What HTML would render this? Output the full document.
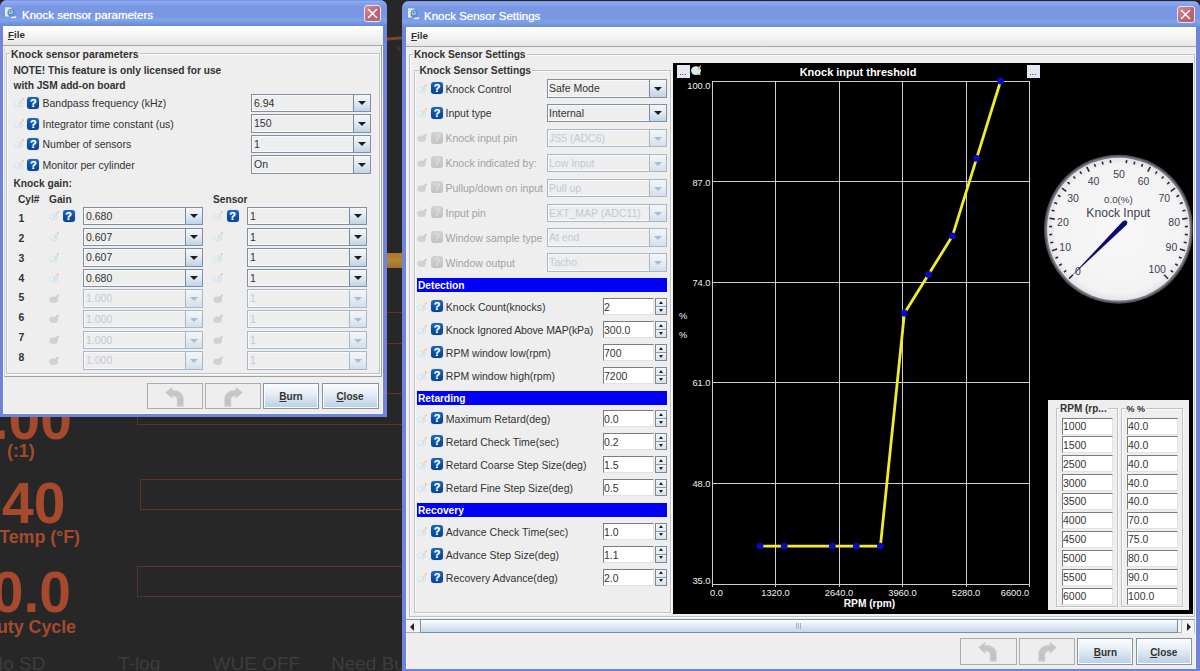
<!DOCTYPE html><html><head><meta charset="utf-8"><title>Knock</title><style>
*{box-sizing:border-box;margin:0;padding:0}
html,body{width:1200px;height:671px;overflow:hidden;background:#282727}
#pg{position:absolute;left:0;top:0;width:1200px;height:671px;overflow:hidden}
body{position:relative;font-family:"Liberation Sans",sans-serif;font-size:10.5px;color:#323232}
.a{position:absolute}
.t{position:absolute;white-space:nowrap;line-height:12px;height:12px}
.b{font-weight:bold}
.win{position:absolute;background:#eeeeee;overflow:hidden}
.tb{position:absolute;left:0;right:0;top:0;background:linear-gradient(#6e8cd6 0,#8eabf2 5%,#84a2ec 14%,#7997e2 26%,#7896e2 60%,#7ea4e7 78%,#7394de 90%,#6985d6 100%)}
.ttl{position:absolute;color:#fff;font-size:11.5px;white-space:nowrap;line-height:14px;text-shadow:0 0 1px #dfe8ff}
.cls{position:absolute;width:17.5px;height:17px;border:1px solid #ecdde8;border-radius:3px;background:linear-gradient(135deg,#cf909c,#b96876 55%,#b36070)}
.menu{position:absolute;background:linear-gradient(#ffffff,#f4f4f4 50%,#e6e6e6);border-bottom:1px solid #a8a8a8}
.grp{position:absolute;border:1px solid #bfc3c8;box-shadow:1px 1px 0 #fafafa,inset 1px 1px 0 #fafafa}
.gl{position:absolute;background:#eeeeee;font-weight:bold;font-size:10.2px;white-space:nowrap;line-height:12px;height:12px;padding:0 1px}
.cb{position:absolute;height:18.5px;border:1px solid #8090a0;background:#eeeeee;box-shadow:inset 0 0 0 1px #f8f9fa}
.cb .v{position:absolute;left:2.5px;top:2px;line-height:12px;font-size:10.5px;white-space:nowrap}
.cb .ar{position:absolute;right:0;top:0;bottom:0;width:17px;border-left:1px solid #7a8a99;background:linear-gradient(#f4f7fa,#e2ebf3 45%,#c0d3e6 100%)}
.cb .ar:after{content:"";position:absolute;left:4px;top:6.5px;border-left:4.5px solid transparent;border-right:4.5px solid transparent;border-top:4.5px solid #1e1e1e}
.cb.d{border-color:#a9b8c8;}
.cb.d .v{color:#c4cad1}
.cb.d .ar{border-left-color:#a9b8c8;background:linear-gradient(#f4f6f8,#e6ecf2 50%,#d3dfeb)}
.cb.d .ar:after{border-top-color:#a6bcd3;left:4.5px;top:7px;border-left-width:4px;border-right-width:4px;border-top-width:4px}
.hp{position:absolute;width:12px;height:12px;border-radius:3px;background:linear-gradient(#1c68ba,#0a50a0 55%,#08468e);box-shadow:0 0 1px #6aa0d8}
.hp:after{content:"?";position:absolute;left:0;right:0;top:0;text-align:center;color:#fff;font-weight:bold;font-size:11px;line-height:12.5px;text-shadow:0 0 1px #9cc8f0}
.hp.d{background:linear-gradient(#d2d2d2,#c2c2c2);box-shadow:none}
.hp.d:after{color:#dcdcdc;text-shadow:none}
.btn{position:absolute;border:1px solid #8494a4;background:linear-gradient(#fbfcfe,#e6eef6 40%,#b9cee4 100%);box-shadow:inset 0 0 0 1px #fbfcfd;text-align:center;font-weight:bold;font-size:10px}
.btn.d{background:#eeeeee;border-color:#a9adb1;box-shadow:none}
.btn span{position:absolute;left:0;right:0;top:7px;line-height:12px}
.bar{position:absolute;background:#0000f4;color:#fff;font-weight:bold;font-size:10.2px;white-space:nowrap;line-height:16.5px;padding-left:1px}
.tf{position:absolute;background:#fff;border-top:1.5px solid #7c7c7c;border-left:1.5px solid #7c7c7c;border-right:1px solid #e2e2e2;border-bottom:1px solid #e2e2e2}
.tf span{position:absolute;left:0px;top:2px;line-height:12px;font-size:10.5px;white-space:nowrap;color:#333}
.sp{position:absolute;width:12px;border:1px solid #7a8a99;background:linear-gradient(#f4f7fa,#dfe9f2 49%,#8a9aa9 49%,#8a9aa9 54%,#f0f4f8 54%,#d5e1ed)}
.sp:before{content:"";position:absolute;left:2.5px;top:1.5px;border-left:2.5px solid transparent;border-right:2.5px solid transparent;border-bottom:3px solid #222}
.sp:after{content:"";position:absolute;left:2.5px;bottom:2.5px;border-left:2.5px solid transparent;border-right:2.5px solid transparent;border-top:3px solid #222}
</style></head><body><div id="pg">
<div class="a b" style="right:1128px;top:389px;font-size:57px;line-height:60px;color:#a54a2c;white-space:nowrap">.00</div>
<div class="a b" style="left:7px;top:441px;font-size:17.8px;line-height:20px;color:#a54a2c;white-space:nowrap">(:1)</div>
<div class="a b" style="right:1134.5px;top:472.5px;font-size:57px;line-height:60px;color:#a54a2c;white-space:nowrap">40</div>
<div class="a b" style="right:1120px;top:526.5px;font-size:17.8px;line-height:20px;color:#a54a2c;white-space:nowrap">Temp (°F)</div>
<div class="a b" style="right:1129px;top:562px;font-size:57px;line-height:60px;color:#a54a2c;white-space:nowrap">10.0</div>
<div class="a b" style="right:1124px;top:616.5px;font-size:17.8px;line-height:20px;color:#a54a2c;white-space:nowrap">Duty Cycle</div>
<div class="a" style="left:137px;top:312px;width:270px;height:31.5px;border:1px solid #5a3426"></div>
<div class="a" style="left:137px;top:393px;width:270px;height:31.5px;border:1px solid #5a3426"></div>
<div class="a" style="left:140px;top:479px;width:270px;height:31px;border:1px solid #5a3426"></div>
<div class="a" style="left:137px;top:566px;width:270px;height:31px;border:1px solid #5a3426"></div>
<div class="a" style="right:1154.5px;top:653px;font-size:19px;line-height:22px;color:#3d3c3c;white-space:nowrap">No SD</div>
<div class="a" style="left:118px;top:653px;font-size:19px;line-height:22px;color:#3d3c3c;white-space:nowrap">T-log</div>
<div class="a" style="left:212.5px;top:653px;font-size:19px;line-height:22px;color:#3d3c3c;white-space:nowrap">WUE OFF</div>
<div class="a" style="left:331px;top:653px;font-size:19px;line-height:22px;color:#3d3c3c;white-space:nowrap">Need Bu</div>
<div class="a" style="left:385px;top:36.5px;width:18px;height:3px;background:#7e4026;transform:rotate(-5deg)"></div>
<div class="a" style="left:386px;top:253px;width:16px;height:15px;background:linear-gradient(#a9772f,#b58438 50%,#a06f2c)"></div>
<div class="a" style="left:398px;top:46px;width:2px;height:5px;background:#5a3020;transform:rotate(-30deg)"></div>
<div class="win" id="w1" style="left:0;top:0;width:386.5px;height:416.7px;border-radius:7px 7px 0 0;background:#7084dc">
<div class="tb" style="height:26px"></div>
<div class="a" style="left:2.5px;top:26px;width:380.5px;height:387.75px;background:#eeeeee;border-left:1.5px solid #f8f8fc;border-right:1px solid #f8f8fc;border-bottom:1px solid #f8f8fc"></div>
<div class="a" style="left:4px;top:46px;width:378px;height:330.5px;border:1px solid #a0a0a0;border-top:none;border-left-color:#d8d8d8"></div>
<svg class="a" style="left:4px;top:6px" width="14" height="14" viewBox="0 0 14 14"><rect x="1" y="1.5" width="4" height="9" fill="#e6f0e4"/><rect x="1" y="1.5" width="6.5" height="3" fill="#dbe8e0"/><circle cx="7.3" cy="6.6" r="3.9" fill="#5d92c8"/><circle cx="6.8" cy="6" r="2.1" fill="#b7d3ee"/><circle cx="6.6" cy="5.6" r="0.9" fill="#3c6f9e"/><path d="M6.5 11 L12.2 10.3 L12.2 12 L7.5 12.2Z" fill="#eef0f6"/></svg>
<div class="ttl" style="left:22px;top:8px">Knock sensor parameters</div>
<div class="cls" style="left:363.5px;top:5px"><svg width="15" height="15" viewBox="0 0 15 15" style="position:absolute;left:0;top:0"><path d="M3.5 3.5 L11.5 11.5 M11.5 3.5 L3.5 11.5" stroke="#fff" stroke-width="1.5" stroke-linecap="round"/></svg></div>
<div class="menu" style="left:3px;top:26px;width:380px;height:19.5px"></div>
<div class="t b" style="left:8px;top:29px;font-size:9.8px"><u>F</u>ile</div>
<div class="grp" style="left:6px;top:53px;width:374px;height:321px"></div>
<div class="gl" style="left:10px;top:48.5px;font-size:10.4px">Knock sensor parameters</div>
<div class="t b" style="left:13.5px;top:64.5px;font-size:10.2px">NOTE! This feature is only licensed for use</div>
<div class="t b" style="left:13.5px;top:80px;font-size:10.2px">with JSM add-on board</div>
<svg class="a" style="left:14px;top:97.0px" width="11" height="11" viewBox="0 0 11 11"><ellipse cx="4.6" cy="6.9" rx="4.7" ry="3.4" fill="#d7e7f1"/><ellipse cx="4.2" cy="6.4" rx="3.2" ry="2" fill="#e6f0f7"/><path d="M5 6 L8.7 1 L10 2 L6.4 7Z" fill="#efdcbe"/><path d="M8 1.9 L8.7 1 L10 2 L9.3 2.9Z" fill="#efb996"/><path d="M5 6 L6.4 7 L4.6 7.6Z" fill="#cdbfae"/></svg>
<div class="hp" style="left:27.3px;top:97.0px"></div>
<div class="t " style="left:42.5px;top:97.0px;">Bandpass frequency (kHz)</div>
<div class="cb" style="left:250.5px;top:93.5px;width:120px"><span class="v">6.94</span><span class="ar"></span></div>
<svg class="a" style="left:14px;top:117.6px" width="11" height="11" viewBox="0 0 11 11"><ellipse cx="4.6" cy="6.9" rx="4.7" ry="3.4" fill="#d7e7f1"/><ellipse cx="4.2" cy="6.4" rx="3.2" ry="2" fill="#e6f0f7"/><path d="M5 6 L8.7 1 L10 2 L6.4 7Z" fill="#efdcbe"/><path d="M8 1.9 L8.7 1 L10 2 L9.3 2.9Z" fill="#efb996"/><path d="M5 6 L6.4 7 L4.6 7.6Z" fill="#cdbfae"/></svg>
<div class="hp" style="left:27.3px;top:117.6px"></div>
<div class="t " style="left:42.5px;top:117.6px;">Integrator time constant (us)</div>
<div class="cb" style="left:250.5px;top:114.1px;width:120px"><span class="v">150</span><span class="ar"></span></div>
<svg class="a" style="left:14px;top:138.2px" width="11" height="11" viewBox="0 0 11 11"><ellipse cx="4.6" cy="6.9" rx="4.7" ry="3.4" fill="#d7e7f1"/><ellipse cx="4.2" cy="6.4" rx="3.2" ry="2" fill="#e6f0f7"/><path d="M5 6 L8.7 1 L10 2 L6.4 7Z" fill="#efdcbe"/><path d="M8 1.9 L8.7 1 L10 2 L9.3 2.9Z" fill="#efb996"/><path d="M5 6 L6.4 7 L4.6 7.6Z" fill="#cdbfae"/></svg>
<div class="hp" style="left:27.3px;top:138.2px"></div>
<div class="t " style="left:42.5px;top:138.2px;">Number of sensors</div>
<div class="cb" style="left:250.5px;top:134.7px;width:120px"><span class="v">1</span><span class="ar"></span></div>
<svg class="a" style="left:14px;top:158.8px" width="11" height="11" viewBox="0 0 11 11"><ellipse cx="4.6" cy="6.9" rx="4.7" ry="3.4" fill="#d7e7f1"/><ellipse cx="4.2" cy="6.4" rx="3.2" ry="2" fill="#e6f0f7"/><path d="M5 6 L8.7 1 L10 2 L6.4 7Z" fill="#efdcbe"/><path d="M8 1.9 L8.7 1 L10 2 L9.3 2.9Z" fill="#efb996"/><path d="M5 6 L6.4 7 L4.6 7.6Z" fill="#cdbfae"/></svg>
<div class="hp" style="left:27.3px;top:158.8px"></div>
<div class="t " style="left:42.5px;top:158.8px;">Monitor per cylinder</div>
<div class="cb" style="left:250.5px;top:155.3px;width:120px"><span class="v">On</span><span class="ar"></span></div>
<div class="t b" style="left:13.5px;top:178.2px;font-size:10.2px">Knock gain:</div>
<div class="t b" style="left:18px;top:193.5px;font-size:10.2px">Cyl#</div>
<div class="t b" style="left:49px;top:193.5px;font-size:10.2px">Gain</div>
<div class="t b" style="left:213px;top:193.5px;font-size:10.2px">Sensor</div>
<div class="t b" style="left:18.5px;top:213.4px;font-size:10.4px">1</div>
<svg class="a" style="left:49px;top:210.4px" width="11" height="11" viewBox="0 0 11 11"><ellipse cx="4.6" cy="6.9" rx="4.7" ry="3.4" fill="#d7e7f1"/><ellipse cx="4.2" cy="6.4" rx="3.2" ry="2" fill="#e6f0f7"/><path d="M5 6 L8.7 1 L10 2 L6.4 7Z" fill="#efdcbe"/><path d="M8 1.9 L8.7 1 L10 2 L9.3 2.9Z" fill="#efb996"/><path d="M5 6 L6.4 7 L4.6 7.6Z" fill="#cdbfae"/></svg>
<div class="hp" style="left:62.5px;top:210.4px"></div>
<div class="cb" style="left:82.5px;top:206.9px;width:120px"><span class="v">0.680</span><span class="ar"></span></div>
<svg class="a" style="left:213px;top:210.4px" width="11" height="11" viewBox="0 0 11 11"><ellipse cx="4.6" cy="6.9" rx="4.7" ry="3.4" fill="#d7e7f1"/><ellipse cx="4.2" cy="6.4" rx="3.2" ry="2" fill="#e6f0f7"/><path d="M5 6 L8.7 1 L10 2 L6.4 7Z" fill="#efdcbe"/><path d="M8 1.9 L8.7 1 L10 2 L9.3 2.9Z" fill="#efb996"/><path d="M5 6 L6.4 7 L4.6 7.6Z" fill="#cdbfae"/></svg>
<div class="hp" style="left:226.5px;top:210.4px"></div>
<div class="cb" style="left:246.5px;top:206.9px;width:120px"><span class="v">1</span><span class="ar"></span></div>
<div class="t b" style="left:18.5px;top:233.14000000000001px;font-size:10.4px">2</div>
<svg class="a" style="left:49px;top:231.0px" width="11" height="11" viewBox="0 0 11 11"><ellipse cx="4.6" cy="6.9" rx="4.7" ry="3.4" fill="#d7e7f1"/><ellipse cx="4.2" cy="6.4" rx="3.2" ry="2" fill="#e6f0f7"/><path d="M5 6 L8.7 1 L10 2 L6.4 7Z" fill="#efdcbe"/><path d="M8 1.9 L8.7 1 L10 2 L9.3 2.9Z" fill="#efb996"/><path d="M5 6 L6.4 7 L4.6 7.6Z" fill="#cdbfae"/></svg>
<div class="cb" style="left:82.5px;top:227.5px;width:120px"><span class="v">0.607</span><span class="ar"></span></div>
<svg class="a" style="left:213px;top:231.0px" width="11" height="11" viewBox="0 0 11 11"><ellipse cx="4.6" cy="6.9" rx="4.7" ry="3.4" fill="#d7e7f1"/><ellipse cx="4.2" cy="6.4" rx="3.2" ry="2" fill="#e6f0f7"/><path d="M5 6 L8.7 1 L10 2 L6.4 7Z" fill="#efdcbe"/><path d="M8 1.9 L8.7 1 L10 2 L9.3 2.9Z" fill="#efb996"/><path d="M5 6 L6.4 7 L4.6 7.6Z" fill="#cdbfae"/></svg>
<div class="cb" style="left:246.5px;top:227.5px;width:120px"><span class="v">1</span><span class="ar"></span></div>
<div class="t b" style="left:18.5px;top:252.88px;font-size:10.4px">3</div>
<svg class="a" style="left:49px;top:251.60000000000002px" width="11" height="11" viewBox="0 0 11 11"><ellipse cx="4.6" cy="6.9" rx="4.7" ry="3.4" fill="#d7e7f1"/><ellipse cx="4.2" cy="6.4" rx="3.2" ry="2" fill="#e6f0f7"/><path d="M5 6 L8.7 1 L10 2 L6.4 7Z" fill="#efdcbe"/><path d="M8 1.9 L8.7 1 L10 2 L9.3 2.9Z" fill="#efb996"/><path d="M5 6 L6.4 7 L4.6 7.6Z" fill="#cdbfae"/></svg>
<div class="cb" style="left:82.5px;top:248.10000000000002px;width:120px"><span class="v">0.607</span><span class="ar"></span></div>
<svg class="a" style="left:213px;top:251.60000000000002px" width="11" height="11" viewBox="0 0 11 11"><ellipse cx="4.6" cy="6.9" rx="4.7" ry="3.4" fill="#d7e7f1"/><ellipse cx="4.2" cy="6.4" rx="3.2" ry="2" fill="#e6f0f7"/><path d="M5 6 L8.7 1 L10 2 L6.4 7Z" fill="#efdcbe"/><path d="M8 1.9 L8.7 1 L10 2 L9.3 2.9Z" fill="#efb996"/><path d="M5 6 L6.4 7 L4.6 7.6Z" fill="#cdbfae"/></svg>
<div class="cb" style="left:246.5px;top:248.10000000000002px;width:120px"><span class="v">1</span><span class="ar"></span></div>
<div class="t b" style="left:18.5px;top:272.62px;font-size:10.4px">4</div>
<svg class="a" style="left:49px;top:272.2px" width="11" height="11" viewBox="0 0 11 11"><ellipse cx="4.6" cy="6.9" rx="4.7" ry="3.4" fill="#d7e7f1"/><ellipse cx="4.2" cy="6.4" rx="3.2" ry="2" fill="#e6f0f7"/><path d="M5 6 L8.7 1 L10 2 L6.4 7Z" fill="#efdcbe"/><path d="M8 1.9 L8.7 1 L10 2 L9.3 2.9Z" fill="#efb996"/><path d="M5 6 L6.4 7 L4.6 7.6Z" fill="#cdbfae"/></svg>
<div class="cb" style="left:82.5px;top:268.7px;width:120px"><span class="v">0.680</span><span class="ar"></span></div>
<svg class="a" style="left:213px;top:272.2px" width="11" height="11" viewBox="0 0 11 11"><ellipse cx="4.6" cy="6.9" rx="4.7" ry="3.4" fill="#d7e7f1"/><ellipse cx="4.2" cy="6.4" rx="3.2" ry="2" fill="#e6f0f7"/><path d="M5 6 L8.7 1 L10 2 L6.4 7Z" fill="#efdcbe"/><path d="M8 1.9 L8.7 1 L10 2 L9.3 2.9Z" fill="#efb996"/><path d="M5 6 L6.4 7 L4.6 7.6Z" fill="#cdbfae"/></svg>
<div class="cb" style="left:246.5px;top:268.7px;width:120px"><span class="v">1</span><span class="ar"></span></div>
<div class="t b" style="left:18.5px;top:292.36px;font-size:10.4px">5</div>
<svg class="a" style="left:49px;top:292.8px" width="11" height="11" viewBox="0 0 11 11"><ellipse cx="4.6" cy="6.8" rx="4.4" ry="3.2" fill="#d2d2d2"/><path d="M5 5.5 L8.8 1.2 L10.2 2.4 L7 6.8Z" fill="#cecece"/></svg>
<div class="cb d" style="left:82.5px;top:289.3px;width:120px"><span class="v">1.000</span><span class="ar"></span></div>
<svg class="a" style="left:213px;top:292.8px" width="11" height="11" viewBox="0 0 11 11"><ellipse cx="4.6" cy="6.8" rx="4.4" ry="3.2" fill="#d2d2d2"/><path d="M5 5.5 L8.8 1.2 L10.2 2.4 L7 6.8Z" fill="#cecece"/></svg>
<div class="cb d" style="left:246.5px;top:289.3px;width:120px"><span class="v">1</span><span class="ar"></span></div>
<div class="t b" style="left:18.5px;top:312.1px;font-size:10.4px">6</div>
<svg class="a" style="left:49px;top:313.4px" width="11" height="11" viewBox="0 0 11 11"><ellipse cx="4.6" cy="6.8" rx="4.4" ry="3.2" fill="#d2d2d2"/><path d="M5 5.5 L8.8 1.2 L10.2 2.4 L7 6.8Z" fill="#cecece"/></svg>
<div class="cb d" style="left:82.5px;top:309.9px;width:120px"><span class="v">1.000</span><span class="ar"></span></div>
<svg class="a" style="left:213px;top:313.4px" width="11" height="11" viewBox="0 0 11 11"><ellipse cx="4.6" cy="6.8" rx="4.4" ry="3.2" fill="#d2d2d2"/><path d="M5 5.5 L8.8 1.2 L10.2 2.4 L7 6.8Z" fill="#cecece"/></svg>
<div class="cb d" style="left:246.5px;top:309.9px;width:120px"><span class="v">1</span><span class="ar"></span></div>
<div class="t b" style="left:18.5px;top:331.84000000000003px;font-size:10.4px">7</div>
<svg class="a" style="left:49px;top:334.0px" width="11" height="11" viewBox="0 0 11 11"><ellipse cx="4.6" cy="6.8" rx="4.4" ry="3.2" fill="#d2d2d2"/><path d="M5 5.5 L8.8 1.2 L10.2 2.4 L7 6.8Z" fill="#cecece"/></svg>
<div class="cb d" style="left:82.5px;top:330.5px;width:120px"><span class="v">1.000</span><span class="ar"></span></div>
<svg class="a" style="left:213px;top:334.0px" width="11" height="11" viewBox="0 0 11 11"><ellipse cx="4.6" cy="6.8" rx="4.4" ry="3.2" fill="#d2d2d2"/><path d="M5 5.5 L8.8 1.2 L10.2 2.4 L7 6.8Z" fill="#cecece"/></svg>
<div class="cb d" style="left:246.5px;top:330.5px;width:120px"><span class="v">1</span><span class="ar"></span></div>
<div class="t b" style="left:18.5px;top:351.58px;font-size:10.4px">8</div>
<svg class="a" style="left:49px;top:354.6px" width="11" height="11" viewBox="0 0 11 11"><ellipse cx="4.6" cy="6.8" rx="4.4" ry="3.2" fill="#d2d2d2"/><path d="M5 5.5 L8.8 1.2 L10.2 2.4 L7 6.8Z" fill="#cecece"/></svg>
<div class="cb d" style="left:82.5px;top:351.1px;width:120px"><span class="v">1.000</span><span class="ar"></span></div>
<svg class="a" style="left:213px;top:354.6px" width="11" height="11" viewBox="0 0 11 11"><ellipse cx="4.6" cy="6.8" rx="4.4" ry="3.2" fill="#d2d2d2"/><path d="M5 5.5 L8.8 1.2 L10.2 2.4 L7 6.8Z" fill="#cecece"/></svg>
<div class="cb d" style="left:246.5px;top:351.1px;width:120px"><span class="v">1</span><span class="ar"></span></div>
<div class="btn d" style="left:147px;top:382.5px;width:56px;height:26px"><svg class="a" style="left:15px;top:2px" width="24" height="22" viewBox="0 0 24 22"><g><path d="M2.5 6.5 L9 1 L9 4.2 C16 4 20.5 7.5 20.5 13 L20.5 20.5 L14 20.5 L14 13.5 C14 10.8 12 10 9 10 L9 12.5 Z" fill="#c6c6c6" stroke="#d6d6d6" stroke-width="0.8"/><path d="M15 14 L19.5 14 M15 17 L19.5 17" stroke="#b8b8b8" stroke-width="0.8"/></g></svg></div>
<div class="btn d" style="left:205px;top:382.5px;width:56px;height:26px"><svg class="a" style="left:15px;top:2px" width="24" height="22" viewBox="0 0 24 22"><g transform="translate(24,0) scale(-1,1)"><path d="M2.5 6.5 L9 1 L9 4.2 C16 4 20.5 7.5 20.5 13 L20.5 20.5 L14 20.5 L14 13.5 C14 10.8 12 10 9 10 L9 12.5 Z" fill="#c6c6c6" stroke="#d6d6d6" stroke-width="0.8"/><path d="M15 14 L19.5 14 M15 17 L19.5 17" stroke="#b8b8b8" stroke-width="0.8"/></g></svg></div>
<div class="btn" style="left:263px;top:382.5px;width:56px;height:26px"><span style="top:7.6px"><u>B</u>urn</span></div>
<div class="btn" style="left:321.5px;top:382.5px;width:57px;height:26px"><span style="top:7.6px"><u>C</u>lose</span></div>
</div>
<div class="win" id="w2" style="left:402px;top:1px;width:798px;height:680px;border-radius:7px 7px 0 0;background:#6f83dc">
<div class="tb" style="height:26.5px"></div>
<div class="a" style="left:3.7px;top:26px;width:790.7px;height:642.3px;background:#eeeeee;border-left:1px solid #f8f8fc;border-right:1px solid #f8f8fc"></div>
</div>
<svg class="a" style="left:407px;top:7px" width="14" height="14" viewBox="0 0 14 14"><rect x="1" y="1.5" width="4" height="9" fill="#e6f0e4"/><rect x="1" y="1.5" width="6.5" height="3" fill="#dbe8e0"/><circle cx="7.3" cy="6.6" r="3.9" fill="#5d92c8"/><circle cx="6.8" cy="6" r="2.1" fill="#b7d3ee"/><circle cx="6.6" cy="5.6" r="0.9" fill="#3c6f9e"/><path d="M6.5 11 L12.2 10.3 L12.2 12 L7.5 12.2Z" fill="#eef0f6"/></svg>
<div class="ttl" style="left:424px;top:9px">Knock Sensor Settings</div>
<div class="cls" style="left:1177.3px;top:6.3px"><svg width="15" height="15" viewBox="0 0 15 15" style="position:absolute;left:0;top:0"><path d="M3.5 3.5 L11.5 11.5 M11.5 3.5 L3.5 11.5" stroke="#fff" stroke-width="1.5" stroke-linecap="round"/></svg></div>
<div class="menu" style="left:405.7px;top:27px;width:790.7px;height:19.5px"></div>
<div class="t b" style="left:411px;top:30px;font-size:9.8px"><u>F</u>ile</div>
<div class="grp" style="left:409px;top:54px;width:786px;height:562.5px"></div>
<div class="gl" style="left:413px;top:48.5px">Knock Sensor Settings</div>
<div class="grp" style="left:414px;top:70px;width:256.5px;height:543px"></div>
<div class="gl" style="left:418.5px;top:64.5px">Knock Sensor Settings</div>
<svg class="a" style="left:417px;top:82.5px" width="11" height="11" viewBox="0 0 11 11"><ellipse cx="4.6" cy="6.9" rx="4.7" ry="3.4" fill="#d7e7f1"/><ellipse cx="4.2" cy="6.4" rx="3.2" ry="2" fill="#e6f0f7"/><path d="M5 6 L8.7 1 L10 2 L6.4 7Z" fill="#efdcbe"/><path d="M8 1.9 L8.7 1 L10 2 L9.3 2.9Z" fill="#efb996"/><path d="M5 6 L6.4 7 L4.6 7.6Z" fill="#cdbfae"/></svg>
<div class="hp" style="left:431px;top:81.75px"></div>
<div class="t " style="left:445.5px;top:82.5px;">Knock Control</div>
<div class="cb" style="left:547px;top:79.0px;width:119.5px"><span class="v" style="left:1px">Safe Mode</span><span class="ar"></span></div>
<svg class="a" style="left:417px;top:107.4px" width="11" height="11" viewBox="0 0 11 11"><ellipse cx="4.6" cy="6.9" rx="4.7" ry="3.4" fill="#d7e7f1"/><ellipse cx="4.2" cy="6.4" rx="3.2" ry="2" fill="#e6f0f7"/><path d="M5 6 L8.7 1 L10 2 L6.4 7Z" fill="#efdcbe"/><path d="M8 1.9 L8.7 1 L10 2 L9.3 2.9Z" fill="#efb996"/><path d="M5 6 L6.4 7 L4.6 7.6Z" fill="#cdbfae"/></svg>
<div class="hp" style="left:431px;top:106.65px"></div>
<div class="t " style="left:445.5px;top:107.4px;">Input type</div>
<div class="cb" style="left:547px;top:103.9px;width:119.5px"><span class="v" style="left:1px">Internal</span><span class="ar"></span></div>
<svg class="a" style="left:417px;top:132.3px" width="11" height="11" viewBox="0 0 11 11"><ellipse cx="4.6" cy="6.8" rx="4.4" ry="3.2" fill="#d2d2d2"/><path d="M5 5.5 L8.8 1.2 L10.2 2.4 L7 6.8Z" fill="#cecece"/></svg>
<div class="hp d" style="left:431px;top:131.55px"></div>
<div class="t " style="left:445.5px;top:132.3px;color:#a2a2a2">Knock input pin</div>
<div class="cb d" style="left:547px;top:128.8px;width:119.5px"><span class="v" style="left:1px">JS5 (ADC6)</span><span class="ar"></span></div>
<svg class="a" style="left:417px;top:157.2px" width="11" height="11" viewBox="0 0 11 11"><ellipse cx="4.6" cy="6.8" rx="4.4" ry="3.2" fill="#d2d2d2"/><path d="M5 5.5 L8.8 1.2 L10.2 2.4 L7 6.8Z" fill="#cecece"/></svg>
<div class="hp d" style="left:431px;top:156.45px"></div>
<div class="t " style="left:445.5px;top:157.2px;color:#a2a2a2">Knock indicated by:</div>
<div class="cb d" style="left:547px;top:153.7px;width:119.5px"><span class="v" style="left:1px">Low Input</span><span class="ar"></span></div>
<svg class="a" style="left:417px;top:182.1px" width="11" height="11" viewBox="0 0 11 11"><ellipse cx="4.6" cy="6.8" rx="4.4" ry="3.2" fill="#d2d2d2"/><path d="M5 5.5 L8.8 1.2 L10.2 2.4 L7 6.8Z" fill="#cecece"/></svg>
<div class="hp d" style="left:431px;top:181.35px"></div>
<div class="t " style="left:445.5px;top:182.1px;color:#a2a2a2">Pullup/down on input</div>
<div class="cb d" style="left:547px;top:178.6px;width:119.5px"><span class="v" style="left:1px">Pull up</span><span class="ar"></span></div>
<svg class="a" style="left:417px;top:207.0px" width="11" height="11" viewBox="0 0 11 11"><ellipse cx="4.6" cy="6.8" rx="4.4" ry="3.2" fill="#d2d2d2"/><path d="M5 5.5 L8.8 1.2 L10.2 2.4 L7 6.8Z" fill="#cecece"/></svg>
<div class="hp d" style="left:431px;top:206.25px"></div>
<div class="t " style="left:445.5px;top:207.0px;color:#a2a2a2">Input pin</div>
<div class="cb d" style="left:547px;top:203.5px;width:119.5px"><span class="v" style="left:1px">EXT_MAP (ADC11)</span><span class="ar"></span></div>
<svg class="a" style="left:417px;top:231.89999999999998px" width="11" height="11" viewBox="0 0 11 11"><ellipse cx="4.6" cy="6.8" rx="4.4" ry="3.2" fill="#d2d2d2"/><path d="M5 5.5 L8.8 1.2 L10.2 2.4 L7 6.8Z" fill="#cecece"/></svg>
<div class="hp d" style="left:431px;top:231.14999999999998px"></div>
<div class="t " style="left:445.5px;top:231.89999999999998px;color:#a2a2a2">Window sample type</div>
<div class="cb d" style="left:547px;top:228.39999999999998px;width:119.5px"><span class="v" style="left:1px">At end</span><span class="ar"></span></div>
<svg class="a" style="left:417px;top:256.79999999999995px" width="11" height="11" viewBox="0 0 11 11"><ellipse cx="4.6" cy="6.8" rx="4.4" ry="3.2" fill="#d2d2d2"/><path d="M5 5.5 L8.8 1.2 L10.2 2.4 L7 6.8Z" fill="#cecece"/></svg>
<div class="hp d" style="left:431px;top:256.04999999999995px"></div>
<div class="t " style="left:445.5px;top:256.79999999999995px;color:#a2a2a2">Window output</div>
<div class="cb d" style="left:547px;top:253.29999999999995px;width:119.5px"><span class="v" style="left:1px">Tacho</span><span class="ar"></span></div>
<div class="bar" style="left:417px;top:278px;width:250px;height:14px">Detection</div>
<svg class="a" style="left:417px;top:301px" width="11" height="11" viewBox="0 0 11 11"><ellipse cx="4.6" cy="6.9" rx="4.7" ry="3.4" fill="#d7e7f1"/><ellipse cx="4.2" cy="6.4" rx="3.2" ry="2" fill="#e6f0f7"/><path d="M5 6 L8.7 1 L10 2 L6.4 7Z" fill="#efdcbe"/><path d="M8 1.9 L8.7 1 L10 2 L9.3 2.9Z" fill="#efb996"/><path d="M5 6 L6.4 7 L4.6 7.6Z" fill="#cdbfae"/></svg>
<div class="hp" style="left:431px;top:300.0px"></div>
<div class="t " style="left:445.8px;top:301px;">Knock Count(knocks)</div>
<div class="tf" style="left:603px;top:298px;width:50.5px;height:17px"><span>2</span></div>
<div class="sp" style="left:655px;top:298px;height:17px"></div>
<svg class="a" style="left:417px;top:324px" width="11" height="11" viewBox="0 0 11 11"><ellipse cx="4.6" cy="6.9" rx="4.7" ry="3.4" fill="#d7e7f1"/><ellipse cx="4.2" cy="6.4" rx="3.2" ry="2" fill="#e6f0f7"/><path d="M5 6 L8.7 1 L10 2 L6.4 7Z" fill="#efdcbe"/><path d="M8 1.9 L8.7 1 L10 2 L9.3 2.9Z" fill="#efb996"/><path d="M5 6 L6.4 7 L4.6 7.6Z" fill="#cdbfae"/></svg>
<div class="hp" style="left:431px;top:323.0px"></div>
<div class="t " style="left:445.8px;top:324px;letter-spacing:-0.12px">Knock Ignored Above MAP(kPa)</div>
<div class="tf" style="left:603px;top:321px;width:50.5px;height:17px"><span>300.0</span></div>
<div class="sp" style="left:655px;top:321px;height:17px"></div>
<svg class="a" style="left:417px;top:347px" width="11" height="11" viewBox="0 0 11 11"><ellipse cx="4.6" cy="6.9" rx="4.7" ry="3.4" fill="#d7e7f1"/><ellipse cx="4.2" cy="6.4" rx="3.2" ry="2" fill="#e6f0f7"/><path d="M5 6 L8.7 1 L10 2 L6.4 7Z" fill="#efdcbe"/><path d="M8 1.9 L8.7 1 L10 2 L9.3 2.9Z" fill="#efb996"/><path d="M5 6 L6.4 7 L4.6 7.6Z" fill="#cdbfae"/></svg>
<div class="hp" style="left:431px;top:346.0px"></div>
<div class="t " style="left:445.8px;top:347px;">RPM window low(rpm)</div>
<div class="tf" style="left:603px;top:344px;width:50.5px;height:17px"><span>700</span></div>
<div class="sp" style="left:655px;top:344px;height:17px"></div>
<svg class="a" style="left:417px;top:370px" width="11" height="11" viewBox="0 0 11 11"><ellipse cx="4.6" cy="6.9" rx="4.7" ry="3.4" fill="#d7e7f1"/><ellipse cx="4.2" cy="6.4" rx="3.2" ry="2" fill="#e6f0f7"/><path d="M5 6 L8.7 1 L10 2 L6.4 7Z" fill="#efdcbe"/><path d="M8 1.9 L8.7 1 L10 2 L9.3 2.9Z" fill="#efb996"/><path d="M5 6 L6.4 7 L4.6 7.6Z" fill="#cdbfae"/></svg>
<div class="hp" style="left:431px;top:369.0px"></div>
<div class="t " style="left:445.8px;top:370px;">RPM window high(rpm)</div>
<div class="tf" style="left:603px;top:367px;width:50.5px;height:17px"><span>7200</span></div>
<div class="sp" style="left:655px;top:367px;height:17px"></div>
<div class="bar" style="left:417px;top:390.5px;width:250px;height:14px">Retarding</div>
<svg class="a" style="left:417px;top:413px" width="11" height="11" viewBox="0 0 11 11"><ellipse cx="4.6" cy="6.9" rx="4.7" ry="3.4" fill="#d7e7f1"/><ellipse cx="4.2" cy="6.4" rx="3.2" ry="2" fill="#e6f0f7"/><path d="M5 6 L8.7 1 L10 2 L6.4 7Z" fill="#efdcbe"/><path d="M8 1.9 L8.7 1 L10 2 L9.3 2.9Z" fill="#efb996"/><path d="M5 6 L6.4 7 L4.6 7.6Z" fill="#cdbfae"/></svg>
<div class="hp" style="left:431px;top:412.0px"></div>
<div class="t " style="left:445.8px;top:413px;">Maximum Retard(deg)</div>
<div class="tf" style="left:603px;top:410px;width:50.5px;height:17px"><span>0.0</span></div>
<div class="sp" style="left:655px;top:410px;height:17px"></div>
<svg class="a" style="left:417px;top:436px" width="11" height="11" viewBox="0 0 11 11"><ellipse cx="4.6" cy="6.9" rx="4.7" ry="3.4" fill="#d7e7f1"/><ellipse cx="4.2" cy="6.4" rx="3.2" ry="2" fill="#e6f0f7"/><path d="M5 6 L8.7 1 L10 2 L6.4 7Z" fill="#efdcbe"/><path d="M8 1.9 L8.7 1 L10 2 L9.3 2.9Z" fill="#efb996"/><path d="M5 6 L6.4 7 L4.6 7.6Z" fill="#cdbfae"/></svg>
<div class="hp" style="left:431px;top:435.0px"></div>
<div class="t " style="left:445.8px;top:436px;">Retard Check Time(sec)</div>
<div class="tf" style="left:603px;top:433px;width:50.5px;height:17px"><span>0.2</span></div>
<div class="sp" style="left:655px;top:433px;height:17px"></div>
<svg class="a" style="left:417px;top:459px" width="11" height="11" viewBox="0 0 11 11"><ellipse cx="4.6" cy="6.9" rx="4.7" ry="3.4" fill="#d7e7f1"/><ellipse cx="4.2" cy="6.4" rx="3.2" ry="2" fill="#e6f0f7"/><path d="M5 6 L8.7 1 L10 2 L6.4 7Z" fill="#efdcbe"/><path d="M8 1.9 L8.7 1 L10 2 L9.3 2.9Z" fill="#efb996"/><path d="M5 6 L6.4 7 L4.6 7.6Z" fill="#cdbfae"/></svg>
<div class="hp" style="left:431px;top:458.0px"></div>
<div class="t " style="left:445.8px;top:459px;">Retard Coarse Step Size(deg)</div>
<div class="tf" style="left:603px;top:456px;width:50.5px;height:17px"><span>1.5</span></div>
<div class="sp" style="left:655px;top:456px;height:17px"></div>
<svg class="a" style="left:417px;top:482px" width="11" height="11" viewBox="0 0 11 11"><ellipse cx="4.6" cy="6.9" rx="4.7" ry="3.4" fill="#d7e7f1"/><ellipse cx="4.2" cy="6.4" rx="3.2" ry="2" fill="#e6f0f7"/><path d="M5 6 L8.7 1 L10 2 L6.4 7Z" fill="#efdcbe"/><path d="M8 1.9 L8.7 1 L10 2 L9.3 2.9Z" fill="#efb996"/><path d="M5 6 L6.4 7 L4.6 7.6Z" fill="#cdbfae"/></svg>
<div class="hp" style="left:431px;top:481.0px"></div>
<div class="t " style="left:445.8px;top:482px;">Retard Fine Step Size(deg)</div>
<div class="tf" style="left:603px;top:479px;width:50.5px;height:17px"><span>0.5</span></div>
<div class="sp" style="left:655px;top:479px;height:17px"></div>
<div class="bar" style="left:417px;top:503px;width:250px;height:14px">Recovery</div>
<svg class="a" style="left:417px;top:525.5px" width="11" height="11" viewBox="0 0 11 11"><ellipse cx="4.6" cy="6.9" rx="4.7" ry="3.4" fill="#d7e7f1"/><ellipse cx="4.2" cy="6.4" rx="3.2" ry="2" fill="#e6f0f7"/><path d="M5 6 L8.7 1 L10 2 L6.4 7Z" fill="#efdcbe"/><path d="M8 1.9 L8.7 1 L10 2 L9.3 2.9Z" fill="#efb996"/><path d="M5 6 L6.4 7 L4.6 7.6Z" fill="#cdbfae"/></svg>
<div class="hp" style="left:431px;top:524.5px"></div>
<div class="t " style="left:445.8px;top:525.5px;">Advance Check Time(sec)</div>
<div class="tf" style="left:603px;top:522.5px;width:50.5px;height:17px"><span>1.0</span></div>
<div class="sp" style="left:655px;top:522.5px;height:17px"></div>
<svg class="a" style="left:417px;top:548.5px" width="11" height="11" viewBox="0 0 11 11"><ellipse cx="4.6" cy="6.9" rx="4.7" ry="3.4" fill="#d7e7f1"/><ellipse cx="4.2" cy="6.4" rx="3.2" ry="2" fill="#e6f0f7"/><path d="M5 6 L8.7 1 L10 2 L6.4 7Z" fill="#efdcbe"/><path d="M8 1.9 L8.7 1 L10 2 L9.3 2.9Z" fill="#efb996"/><path d="M5 6 L6.4 7 L4.6 7.6Z" fill="#cdbfae"/></svg>
<div class="hp" style="left:431px;top:547.5px"></div>
<div class="t " style="left:445.8px;top:548.5px;">Advance Step Size(deg)</div>
<div class="tf" style="left:603px;top:545.5px;width:50.5px;height:17px"><span>1.1</span></div>
<div class="sp" style="left:655px;top:545.5px;height:17px"></div>
<svg class="a" style="left:417px;top:571.5px" width="11" height="11" viewBox="0 0 11 11"><ellipse cx="4.6" cy="6.9" rx="4.7" ry="3.4" fill="#d7e7f1"/><ellipse cx="4.2" cy="6.4" rx="3.2" ry="2" fill="#e6f0f7"/><path d="M5 6 L8.7 1 L10 2 L6.4 7Z" fill="#efdcbe"/><path d="M8 1.9 L8.7 1 L10 2 L9.3 2.9Z" fill="#efb996"/><path d="M5 6 L6.4 7 L4.6 7.6Z" fill="#cdbfae"/></svg>
<div class="hp" style="left:431px;top:570.5px"></div>
<div class="t " style="left:445.8px;top:571.5px;">Recovery Advance(deg)</div>
<div class="tf" style="left:603px;top:568.5px;width:50.5px;height:17px"><span>2.0</span></div>
<div class="sp" style="left:655px;top:568.5px;height:17px"></div>
<div class="a" style="left:673px;top:62.5px;width:519.7px;height:551.25px;background:#000"></div>
<svg class="a" style="left:0;top:0" width="1200" height="671" viewBox="0 0 1200 671"><line x1="712.5" y1="81.0" x2="712.5" y2="587.0" stroke="#cecece" stroke-width="1"/><line x1="775.5" y1="81.0" x2="775.5" y2="587.0" stroke="#cecece" stroke-width="1"/><line x1="839.5" y1="81.0" x2="839.5" y2="587.0" stroke="#cecece" stroke-width="1"/><line x1="902.5" y1="81.0" x2="902.5" y2="587.0" stroke="#cecece" stroke-width="1"/><line x1="966.5" y1="81.0" x2="966.5" y2="587.0" stroke="#cecece" stroke-width="1"/><line x1="1029.5" y1="81.0" x2="1029.5" y2="587.0" stroke="#cecece" stroke-width="1"/><line x1="712.0" y1="81.5" x2="1029.5" y2="81.5" stroke="#cecece" stroke-width="1"/><line x1="712.0" y1="181.5" x2="1029.5" y2="181.5" stroke="#cecece" stroke-width="1"/><line x1="712.0" y1="282.5" x2="1029.5" y2="282.5" stroke="#cecece" stroke-width="1"/><line x1="712.0" y1="382.5" x2="1029.5" y2="382.5" stroke="#cecece" stroke-width="1"/><line x1="712.0" y1="483.5" x2="1029.5" y2="483.5" stroke="#cecece" stroke-width="1"/><line x1="712.0" y1="584.5" x2="1029.5" y2="584.5" stroke="#cecece" stroke-width="1"/><polyline fill="none" stroke="#f0ec2c" stroke-width="2.8" stroke-linejoin="round" points="760.1,546.1 784.2,546.1 832.3,546.1 856.3,546.1 880.4,546.1 904.4,313.2 928.5,274.5 952.5,235.8 976.6,158.4 1000.6,81.0"/><circle cx="760.1" cy="546.1" r="3.4" fill="#0808c8"/><circle cx="784.2" cy="546.1" r="3.4" fill="#0808c8"/><circle cx="832.3" cy="546.1" r="3.4" fill="#0808c8"/><circle cx="856.3" cy="546.1" r="3.4" fill="#0808c8"/><circle cx="880.4" cy="546.1" r="3.4" fill="#0808c8"/><circle cx="904.4" cy="313.2" r="3.4" fill="#0808c8"/><circle cx="928.5" cy="274.5" r="3.4" fill="#0808c8"/><circle cx="952.5" cy="235.8" r="3.4" fill="#0808c8"/><circle cx="976.6" cy="158.4" r="3.4" fill="#0808c8"/><circle cx="1000.6" cy="81.0" r="3.4" fill="#0808c8"/></svg>
<div class="t" style="right:489.5px;top:79.5px;color:#f0f0f0;font-size:9.3px">100.0</div>
<div class="t" style="right:489.5px;top:177px;color:#f0f0f0;font-size:9.3px">87.0</div>
<div class="t" style="right:489.5px;top:276.5px;color:#f0f0f0;font-size:9.3px">74.0</div>
<div class="t" style="right:489.5px;top:377px;color:#f0f0f0;font-size:9.3px">61.0</div>
<div class="t" style="right:489.5px;top:477.5px;color:#f0f0f0;font-size:9.3px">48.0</div>
<div class="t" style="right:489.5px;top:574.5px;color:#f0f0f0;font-size:9.3px">35.0</div>
<div class="t" style="left:686.5px;width:60px;text-align:center;top:586.5px;color:#f0f0f0;font-size:9.3px">0.0</div>
<div class="t" style="left:745.5px;width:60px;text-align:center;top:586.5px;color:#f0f0f0;font-size:9.3px">1320.0</div>
<div class="t" style="left:809px;width:60px;text-align:center;top:586.5px;color:#f0f0f0;font-size:9.3px">2640.0</div>
<div class="t" style="left:872.5px;width:60px;text-align:center;top:586.5px;color:#f0f0f0;font-size:9.3px">3960.0</div>
<div class="t" style="left:936px;width:60px;text-align:center;top:586.5px;color:#f0f0f0;font-size:9.3px">5280.0</div>
<div class="t" style="left:985px;width:60px;text-align:center;top:586.5px;color:#f0f0f0;font-size:9.3px">6600.0</div>
<div class="t b" style="left:829.5px;width:80px;text-align:center;top:598px;color:#fff;font-size:10.2px">RPM (rpm)</div>
<div class="t b" style="left:778px;width:160px;text-align:center;top:65.5px;color:#fff;font-size:11px">Knock input threshold</div>
<div class="t " style="left:679px;top:310px;color:#f0f0f0;font-size:9.3px">%</div>
<div class="t " style="left:679px;top:329px;color:#f0f0f0;font-size:9.3px">%</div>
<div class="a" style="left:677.2px;top:65.3px;width:13px;height:12.4px;background:#e4e8f3"><div class="a" style="left:3px;top:8.8px;width:1.3px;height:1.3px;background:#445;box-shadow:2.4px 0 #445,4.8px 0 #445"></div></div>
<div class="a" style="left:1027.2px;top:65.3px;width:13px;height:12.4px;background:#e4e8f3"><div class="a" style="left:3px;top:8.8px;width:1.3px;height:1.3px;background:#445;box-shadow:2.4px 0 #445,4.8px 0 #445"></div></div>
<svg class="a" style="left:690px;top:64px" width="14" height="13" viewBox="0 0 14 13"><ellipse cx="6" cy="6.6" rx="5" ry="4.4" fill="#dde9e3"/><path d="M7 9.5 L10.6 11.6 L9.6 7.5Z" fill="#dde9e3"/><path d="M7.2 5.2 L10.3 1.2 L11.4 2 L8.4 6Z" fill="#d9b49a"/><path d="M9.7 2 L10.3 1.2 L11.4 2 L10.8 2.8Z" fill="#c8685a"/></svg>
<svg class="a" style="left:0;top:0" width="1200" height="671" viewBox="0 0 1200 671"><defs><radialGradient id="gg" cx="50%" cy="50%" r="50%"><stop offset="0" stop-color="#f8f8f8"/><stop offset="0.9" stop-color="#f3f3f4"/><stop offset="1" stop-color="#e4e4e8"/></radialGradient><clipPath id="gc"><rect x="673" y="63" width="519.7" height="549"/></clipPath></defs><g clip-path="url(#gc)"><circle cx="1118.5" cy="229.2" r="74.5" fill="#505058"/><circle cx="1118.5" cy="229.2" r="73.0" fill="#7a7a84"/><circle cx="1118.5" cy="229.2" r="71.4" fill="url(#gg)"/><line x1="1069.0" y1="278.7" x2="1072.9" y2="274.8" stroke="#2a2a38" stroke-width="1.6"/><line x1="1063.9" y1="272.2" x2="1066.3" y2="270.4" stroke="#2a2a38" stroke-width="1.6"/><line x1="1059.2" y1="265.5" x2="1061.8" y2="263.9" stroke="#2a2a38" stroke-width="1.6"/><line x1="1055.4" y1="258.3" x2="1058.1" y2="257.0" stroke="#2a2a38" stroke-width="1.6"/><line x1="1051.9" y1="250.8" x2="1057.2" y2="249.1" stroke="#2a2a38" stroke-width="1.6"/><line x1="1050.3" y1="242.8" x2="1053.3" y2="242.2" stroke="#2a2a38" stroke-width="1.6"/><line x1="1049.2" y1="234.7" x2="1052.2" y2="234.4" stroke="#2a2a38" stroke-width="1.6"/><line x1="1049.1" y1="226.5" x2="1052.1" y2="226.6" stroke="#2a2a38" stroke-width="1.6"/><line x1="1049.4" y1="218.2" x2="1054.8" y2="219.1" stroke="#2a2a38" stroke-width="1.6"/><line x1="1051.6" y1="210.3" x2="1054.5" y2="211.1" stroke="#2a2a38" stroke-width="1.6"/><line x1="1054.3" y1="202.6" x2="1057.1" y2="203.8" stroke="#2a2a38" stroke-width="1.6"/><line x1="1057.9" y1="195.2" x2="1060.5" y2="196.7" stroke="#2a2a38" stroke-width="1.6"/><line x1="1061.9" y1="188.1" x2="1066.3" y2="191.3" stroke="#2a2a38" stroke-width="1.6"/><line x1="1067.5" y1="182.0" x2="1069.7" y2="184.1" stroke="#2a2a38" stroke-width="1.6"/><line x1="1073.4" y1="176.4" x2="1075.3" y2="178.6" stroke="#2a2a38" stroke-width="1.6"/><line x1="1079.9" y1="171.4" x2="1081.6" y2="173.9" stroke="#2a2a38" stroke-width="1.6"/><line x1="1086.7" y1="166.8" x2="1089.2" y2="171.7" stroke="#2a2a38" stroke-width="1.6"/><line x1="1094.4" y1="164.0" x2="1095.5" y2="166.8" stroke="#2a2a38" stroke-width="1.6"/><line x1="1102.3" y1="161.6" x2="1103.0" y2="164.5" stroke="#2a2a38" stroke-width="1.6"/><line x1="1110.3" y1="160.2" x2="1110.7" y2="163.2" stroke="#2a2a38" stroke-width="1.6"/><line x1="1126.7" y1="160.2" x2="1126.3" y2="163.2" stroke="#2a2a38" stroke-width="1.6"/><line x1="1134.7" y1="161.6" x2="1134.0" y2="164.5" stroke="#2a2a38" stroke-width="1.6"/><line x1="1142.6" y1="164.0" x2="1141.5" y2="166.8" stroke="#2a2a38" stroke-width="1.6"/><line x1="1150.3" y1="166.8" x2="1147.8" y2="171.7" stroke="#2a2a38" stroke-width="1.6"/><line x1="1157.1" y1="171.4" x2="1155.4" y2="173.9" stroke="#2a2a38" stroke-width="1.6"/><line x1="1163.6" y1="176.4" x2="1161.7" y2="178.6" stroke="#2a2a38" stroke-width="1.6"/><line x1="1169.5" y1="182.0" x2="1167.3" y2="184.1" stroke="#2a2a38" stroke-width="1.6"/><line x1="1175.1" y1="188.1" x2="1170.7" y2="191.3" stroke="#2a2a38" stroke-width="1.6"/><line x1="1179.1" y1="195.2" x2="1176.5" y2="196.7" stroke="#2a2a38" stroke-width="1.6"/><line x1="1182.7" y1="202.6" x2="1179.9" y2="203.8" stroke="#2a2a38" stroke-width="1.6"/><line x1="1185.4" y1="210.3" x2="1182.5" y2="211.1" stroke="#2a2a38" stroke-width="1.6"/><line x1="1187.6" y1="218.2" x2="1182.2" y2="219.1" stroke="#2a2a38" stroke-width="1.6"/><line x1="1187.9" y1="226.5" x2="1184.9" y2="226.6" stroke="#2a2a38" stroke-width="1.6"/><line x1="1187.8" y1="234.7" x2="1184.8" y2="234.4" stroke="#2a2a38" stroke-width="1.6"/><line x1="1186.7" y1="242.8" x2="1183.7" y2="242.2" stroke="#2a2a38" stroke-width="1.6"/><line x1="1185.1" y1="250.8" x2="1179.8" y2="249.1" stroke="#2a2a38" stroke-width="1.6"/><line x1="1181.6" y1="258.3" x2="1178.9" y2="257.0" stroke="#2a2a38" stroke-width="1.6"/><line x1="1177.8" y1="265.5" x2="1175.2" y2="263.9" stroke="#2a2a38" stroke-width="1.6"/><line x1="1173.1" y1="272.2" x2="1170.7" y2="270.4" stroke="#2a2a38" stroke-width="1.6"/><line x1="1168.0" y1="278.7" x2="1164.1" y2="274.8" stroke="#2a2a38" stroke-width="1.6"/><text x="1119.0" y="177.6" text-anchor="middle" font-family="Liberation Sans" font-size="10.5" fill="#3e3e50">50</text><text x="1093.5" y="184.7" text-anchor="middle" font-family="Liberation Sans" font-size="10.5" fill="#3e3e50">40</text><text x="1143.6" y="184.7" text-anchor="middle" font-family="Liberation Sans" font-size="10.5" fill="#3e3e50">60</text><text x="1073.0" y="201.7" text-anchor="middle" font-family="Liberation Sans" font-size="10.5" fill="#3e3e50">30</text><text x="1164.3" y="201.7" text-anchor="middle" font-family="Liberation Sans" font-size="10.5" fill="#3e3e50">70</text><text x="1062.9" y="225.7" text-anchor="middle" font-family="Liberation Sans" font-size="10.5" fill="#3e3e50">20</text><text x="1174.2" y="225.7" text-anchor="middle" font-family="Liberation Sans" font-size="10.5" fill="#3e3e50">80</text><text x="1065.2" y="251.3" text-anchor="middle" font-family="Liberation Sans" font-size="10.5" fill="#3e3e50">10</text><text x="1171.4" y="251.3" text-anchor="middle" font-family="Liberation Sans" font-size="10.5" fill="#3e3e50">90</text><text x="1077.9" y="275.3" text-anchor="middle" font-family="Liberation Sans" font-size="10.5" fill="#3e3e50">0</text><text x="1157.2" y="272.5" text-anchor="middle" font-family="Liberation Sans" font-size="10.5" fill="#3e3e50">100</text><text x="1118.4" y="203" text-anchor="middle" font-family="Liberation Sans" font-size="9.8" fill="#3e3e50">0.0(%)</text><text x="1118.3" y="217.2" text-anchor="middle" font-family="Liberation Sans" font-size="12.1" fill="#3e3e50">Knock Input</text><path d="M1069.4 278.3 L1123.0 221.0 L1125.8 220.2 L1127.5 221.9 L1126.7 224.7 Z" fill="#0c0c6e"/></g></svg>
<div class="a" style="left:1047.7px;top:400.4px;width:141.3px;height:209.3px;background:#eeeeee"></div>
<div class="grp" style="left:1056px;top:408px;width:62px;height:199px"></div>
<div class="gl" style="left:1059px;top:403.3px;font-size:10px">RPM (rp...</div>
<div class="grp" style="left:1121px;top:408px;width:62px;height:199px"></div>
<div class="gl" style="left:1125.5px;top:403.3px;font-size:9px">% %</div>
<div class="tf" style="left:1061.5px;top:417.5px;width:51px;height:17px"><span style="top:1.4px;left:0.5px">1000</span></div>
<div class="tf" style="left:1126.5px;top:417.5px;width:51px;height:17px"><span style="top:1.4px;left:0.5px">40.0</span></div>
<div class="tf" style="left:1061.5px;top:436.4px;width:51px;height:17px"><span style="top:1.4px;left:0.5px">1500</span></div>
<div class="tf" style="left:1126.5px;top:436.4px;width:51px;height:17px"><span style="top:1.4px;left:0.5px">40.0</span></div>
<div class="tf" style="left:1061.5px;top:455.3px;width:51px;height:17px"><span style="top:1.4px;left:0.5px">2500</span></div>
<div class="tf" style="left:1126.5px;top:455.3px;width:51px;height:17px"><span style="top:1.4px;left:0.5px">40.0</span></div>
<div class="tf" style="left:1061.5px;top:474.2px;width:51px;height:17px"><span style="top:1.4px;left:0.5px">3000</span></div>
<div class="tf" style="left:1126.5px;top:474.2px;width:51px;height:17px"><span style="top:1.4px;left:0.5px">40.0</span></div>
<div class="tf" style="left:1061.5px;top:493.1px;width:51px;height:17px"><span style="top:1.4px;left:0.5px">3500</span></div>
<div class="tf" style="left:1126.5px;top:493.1px;width:51px;height:17px"><span style="top:1.4px;left:0.5px">40.0</span></div>
<div class="tf" style="left:1061.5px;top:512.0px;width:51px;height:17px"><span style="top:1.4px;left:0.5px">4000</span></div>
<div class="tf" style="left:1126.5px;top:512.0px;width:51px;height:17px"><span style="top:1.4px;left:0.5px">70.0</span></div>
<div class="tf" style="left:1061.5px;top:530.9px;width:51px;height:17px"><span style="top:1.4px;left:0.5px">4500</span></div>
<div class="tf" style="left:1126.5px;top:530.9px;width:51px;height:17px"><span style="top:1.4px;left:0.5px">75.0</span></div>
<div class="tf" style="left:1061.5px;top:549.8px;width:51px;height:17px"><span style="top:1.4px;left:0.5px">5000</span></div>
<div class="tf" style="left:1126.5px;top:549.8px;width:51px;height:17px"><span style="top:1.4px;left:0.5px">80.0</span></div>
<div class="tf" style="left:1061.5px;top:568.7px;width:51px;height:17px"><span style="top:1.4px;left:0.5px">5500</span></div>
<div class="tf" style="left:1126.5px;top:568.7px;width:51px;height:17px"><span style="top:1.4px;left:0.5px">90.0</span></div>
<div class="tf" style="left:1061.5px;top:587.6px;width:51px;height:17px"><span style="top:1.4px;left:0.5px">6000</span></div>
<div class="tf" style="left:1126.5px;top:587.6px;width:51px;height:17px"><span style="top:1.4px;left:0.5px">100.0</span></div>
<div class="a" style="left:406px;top:619px;width:788.5px;height:14px;background:#f3f3f3;border-top:1px solid #8e9cab;border-bottom:1px solid #a3b0bd"></div>
<div class="a" style="left:419.5px;top:619px;width:758.5px;height:14px;border:1px solid #7f8f9f;background:linear-gradient(#ffffff,#f0f5fa 25%,#d3e2f0 70%,#c5d8ea)"></div>
<div class="a" style="left:796px;top:623px;width:1px;height:6px;background:#a3b3c3;box-shadow:2px 0 #a3b3c3,4px 0 #a3b3c3"></div>
<div class="a" style="left:410px;top:622.5px;border-top:4px solid transparent;border-bottom:4px solid transparent;border-right:4.5px solid #222"></div>
<div class="a" style="left:1181px;top:620px;width:13.5px;height:12.5px;border-left:1px solid #b4c0cc;border-right:1px solid #b4c0cc;background:#f3f3f3"></div>
<div class="a" style="left:1187px;top:622.5px;border-top:4px solid transparent;border-bottom:4px solid transparent;border-left:4.5px solid #222"></div>
<div class="btn d" style="left:960.3px;top:638px;width:56.4px;height:27px"><svg class="a" style="left:15px;top:2px" width="24" height="22" viewBox="0 0 24 22"><g><path d="M2.5 6.5 L9 1 L9 4.2 C16 4 20.5 7.5 20.5 13 L20.5 20.5 L14 20.5 L14 13.5 C14 10.8 12 10 9 10 L9 12.5 Z" fill="#c6c6c6" stroke="#d6d6d6" stroke-width="0.8"/><path d="M15 14 L19.5 14 M15 17 L19.5 17" stroke="#b8b8b8" stroke-width="0.8"/></g></svg></div>
<div class="btn d" style="left:1018.9px;top:638px;width:56.4px;height:27px"><svg class="a" style="left:15px;top:2px" width="24" height="22" viewBox="0 0 24 22"><g transform="translate(24,0) scale(-1,1)"><path d="M2.5 6.5 L9 1 L9 4.2 C16 4 20.5 7.5 20.5 13 L20.5 20.5 L14 20.5 L14 13.5 C14 10.8 12 10 9 10 L9 12.5 Z" fill="#c6c6c6" stroke="#d6d6d6" stroke-width="0.8"/><path d="M15 14 L19.5 14 M15 17 L19.5 17" stroke="#b8b8b8" stroke-width="0.8"/></g></svg></div>
<div class="btn" style="left:1077.3px;top:638px;width:56.2px;height:27px"><span style="top:8.1px"><u>B</u>urn</span></div>
<div class="btn" style="left:1135.5px;top:638px;width:56.5px;height:27px"><span style="top:8.1px"><u>C</u>lose</span></div>
<div class="a" style="left:1196.4px;top:27px;width:5px;height:650px;background:#6f83dc"></div>
<div class="a" style="left:402px;top:669.3px;width:800px;height:3px;background:#6f83dc"></div>
<div class="a" style="left:402px;top:27px;width:3px;height:650px;background:#6f83dc"></div>
</div></body></html>
